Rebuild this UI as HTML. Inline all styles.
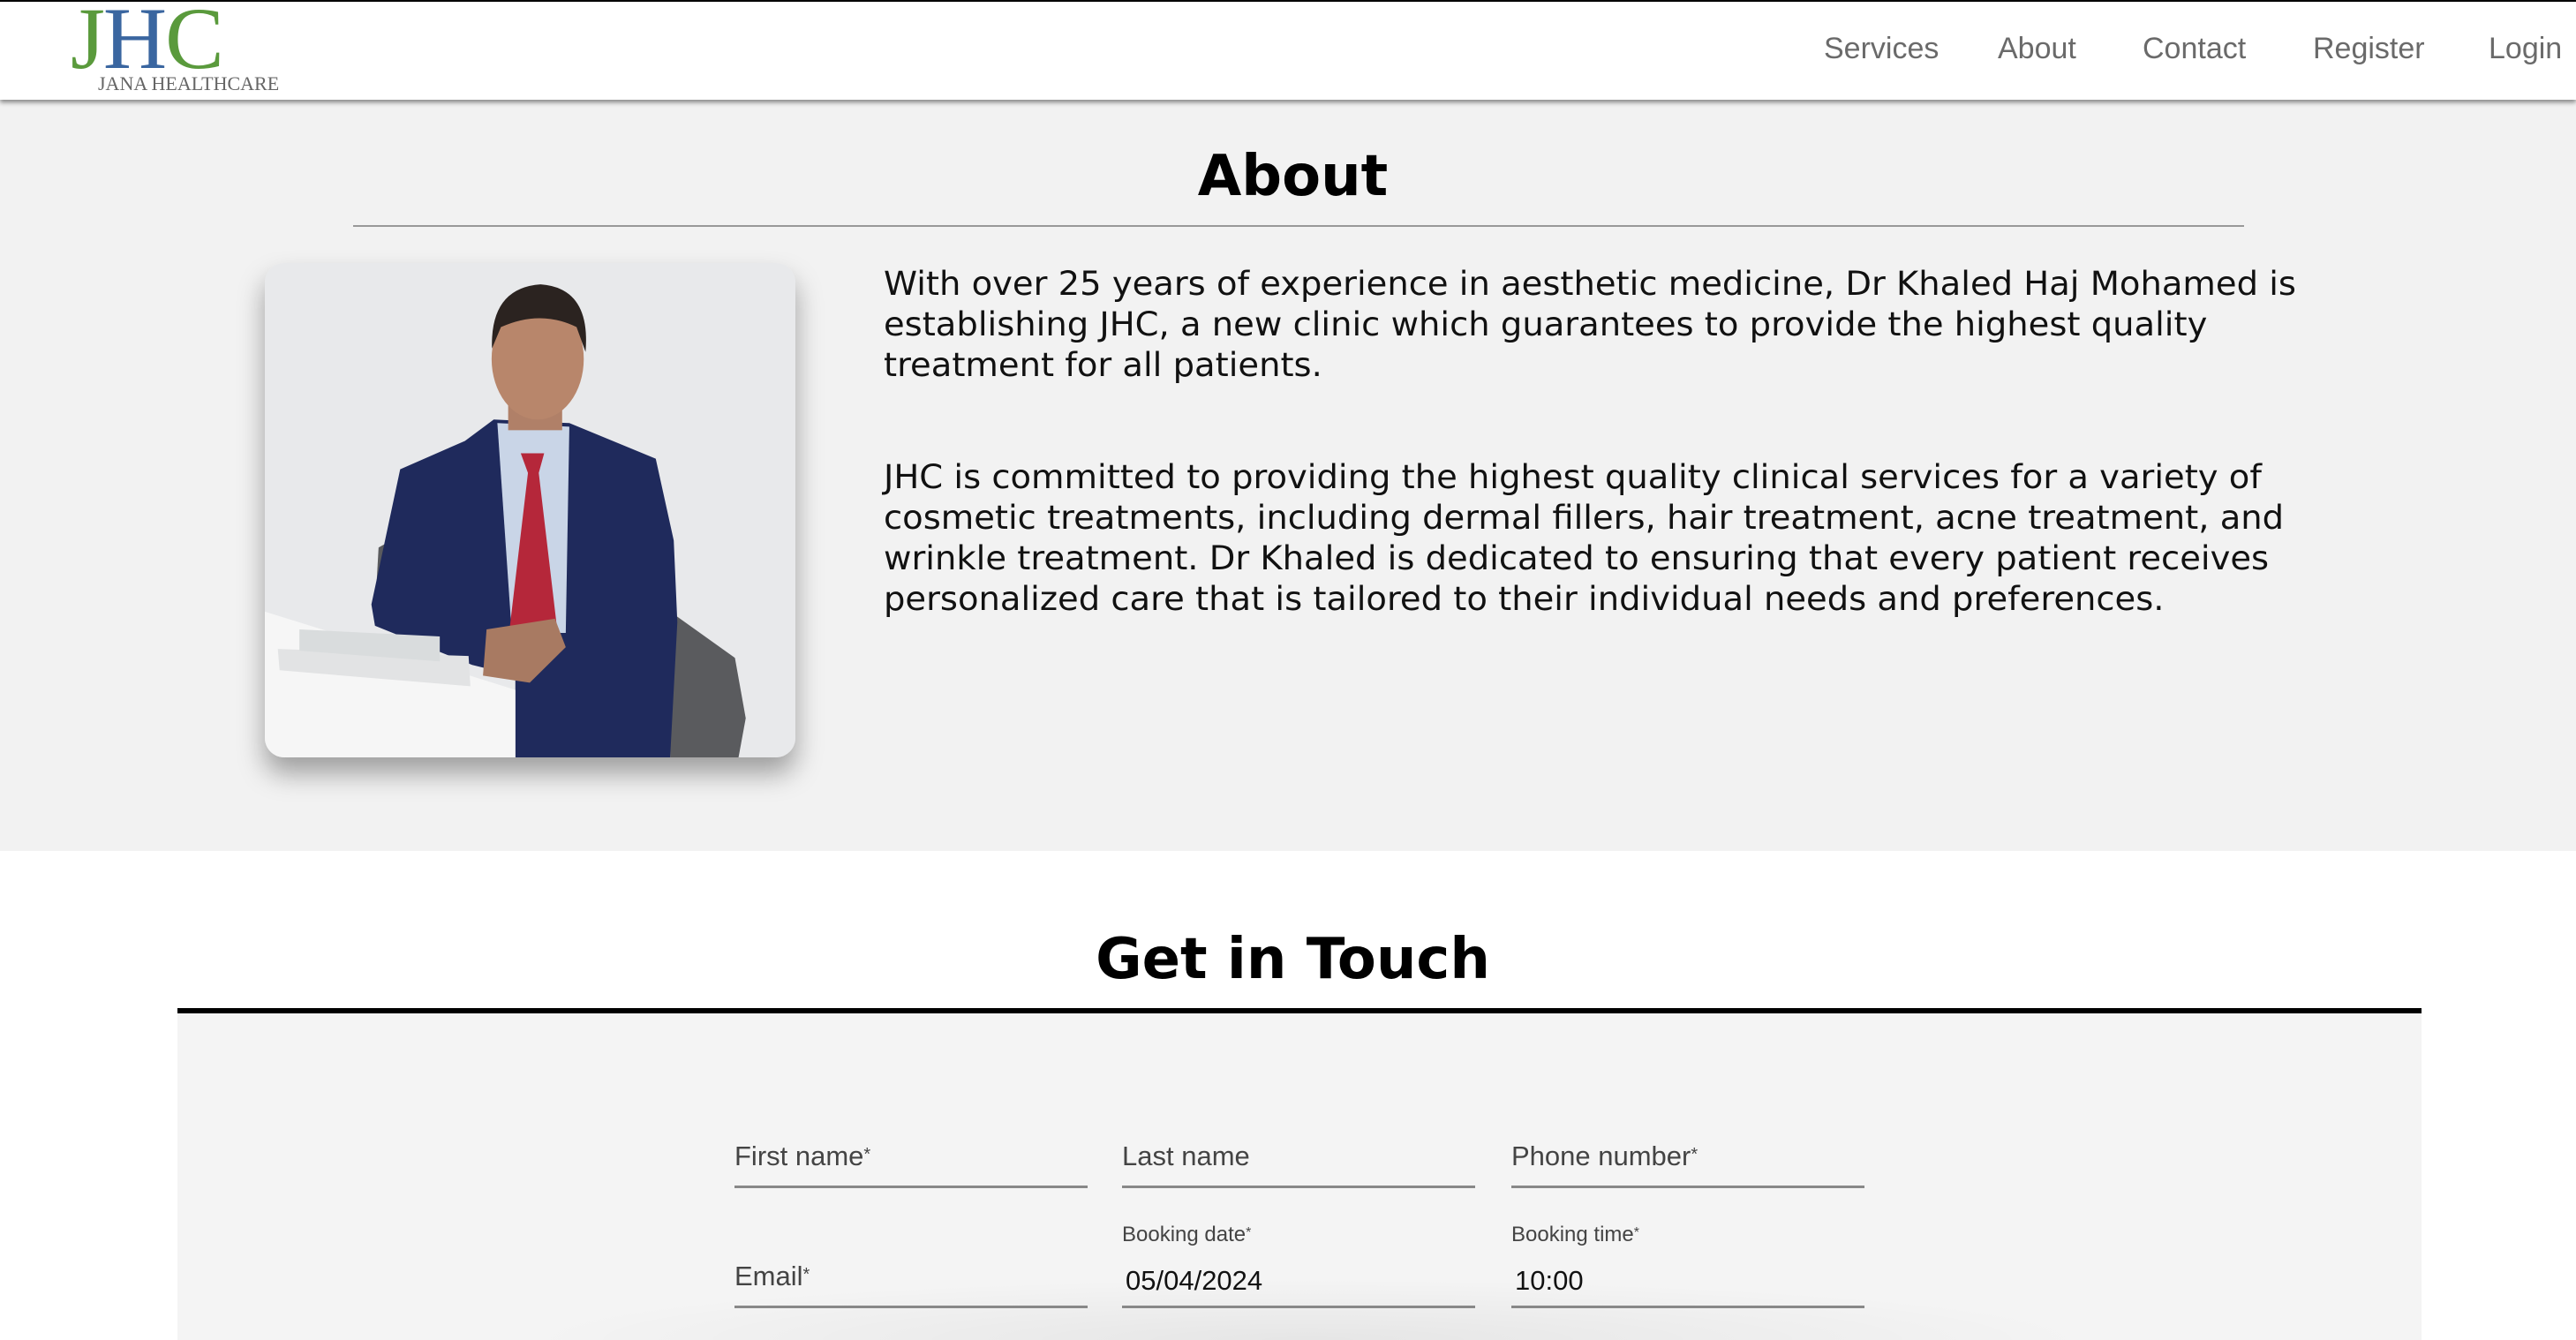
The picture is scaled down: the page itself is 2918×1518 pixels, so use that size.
<!DOCTYPE html>
<html><head><meta charset="utf-8">
<style>
*{margin:0;padding:0;box-sizing:border-box}
html{overflow:hidden;width:2918px;height:1518px}
body{width:2918px;height:1518px;overflow:hidden;background:#fff;font-family:"DejaVu Sans","Liberation Sans",sans-serif;position:relative}
.hdr{position:absolute;left:0;top:0;width:2918px;height:113px;background:#fff;border-top:2px solid #000;box-shadow:0 3px 5px rgba(0,0,0,.45);z-index:2}
.logo{position:absolute;left:80px;top:-8px;font-family:"Liberation Serif",serif;font-size:100px;line-height:1;letter-spacing:-2px}
.sub{position:absolute;left:111px;top:80px;font-family:"Liberation Serif",serif;font-size:22px;color:#666}
.nav{position:absolute;top:34px;font-family:"Liberation Sans",sans-serif;font-size:34px;color:#6a6a6a}
.about{position:absolute;left:0;top:113px;width:2918px;height:851px;background:#f2f2f2}
h1{position:absolute;left:0;width:2918px;padding-left:11px;text-align:center;font-family:"DejaVu Sans",sans-serif;font-weight:bold;font-size:64px;color:#000}
.p{position:absolute;left:1001px;font-size:37px;color:#111;line-height:46px;white-space:nowrap}
.p div{transform:scaleX(1.04);transform-origin:left}
.box{position:absolute;left:201px;top:1148px;width:2542px;height:370px;background:#f4f4f4;overflow:hidden}
.lab{position:absolute;font-family:"Liberation Sans",sans-serif;font-size:31px;color:#444}
.sm{position:absolute;font-family:"Liberation Sans",sans-serif;font-size:24px;color:#444}
.val{position:absolute;font-family:"Liberation Sans",sans-serif;font-size:31px;color:#111}
.ul{position:absolute;width:400px;height:3px;background:#888}
sup{font-size:20px;vertical-align:6px}
</style></head><body>
<div class="hdr">
 <div class="logo"><span style="color:#5a9a3c">J</span><span style="color:#3a66a0">H</span><span style="color:#5a9a3c">C</span></div>
 <div class="sub">JANA HEALTHCARE</div>
 <div class="nav" style="left:2066px">Services</div>
 <div class="nav" style="left:2263px">About</div>
 <div class="nav" style="left:2427px">Contact</div>
 <div class="nav" style="left:2620px">Register</div>
 <div class="nav" style="left:2819px">Login</div>
</div>
<div class="about">
 <h1 style="top:50px">About</h1>
 <div style="position:absolute;left:400px;top:142px;width:2142px;height:2px;background:#999"></div>
 <div style="position:absolute;left:300px;top:185px;width:601px;height:560px;border-radius:22px;overflow:hidden;box-shadow:0 18px 30px rgba(0,0,0,.35)">
 <svg width="601" height="560" viewBox="24 20 1474 1390" preserveAspectRatio="none">
  <rect x="0" y="0" width="1600" height="1500" fill="#e8e9eb"/>
  <path d="M1150 1000 L1330 1130 L1360 1300 L1340 1410 L1150 1410Z" fill="#5a5b5e"/>
  <path d="M340 820 L375 800 L380 990 L330 1000Z" fill="#5a5b5e"/>
  <path d="M320 980 L400 600 L580 520 L660 460 L870 470 L1110 570 L1160 800 L1170 1030 L1150 1410 L720 1410 L720 1180 L600 1150 L330 1040Z" fill="#1f2a5c"/>
  <path d="M670 470 L870 480 L860 1060 L710 1060Z" fill="#c9d5e7"/>
  <path d="M735 555 L800 555 L785 610 L835 1040 L770 1070 L705 1040 L755 610Z" fill="#b5273a"/>
  <rect x="700" y="380" width="150" height="110" fill="#b08068"/>
  <ellipse cx="782" cy="290" rx="128" ry="170" fill="#b8866b"/>
  <path d="M655 260 Q650 90 790 80 Q930 90 915 270 L890 200 Q790 150 680 200Z" fill="#2b2320"/>
  <path d="M640 1050 L830 1020 L860 1100 L760 1200 L630 1180Z" fill="#a87a62"/>
  <path d="M24 1000 L720 1220 L720 1410 L24 1410Z" fill="#f6f6f6"/>
  <path d="M60 1105 L590 1125 L595 1210 L65 1165Z" fill="#e2e3e4"/>
  <path d="M120 1050 L510 1070 L510 1140 L120 1110Z" fill="#d9dcdd"/>
 </svg></div>
 <div class="p" style="top:186px">
  <div>With over 25 years of experience in aesthetic medicine, Dr Khaled Haj Mohamed is</div>
  <div>establishing JHC, a new clinic which guarantees to provide the highest quality</div>
  <div>treatment for all patients.</div>
 </div>
 <div class="p" style="top:405px">
  <div>JHC is committed to providing the highest quality clinical services for a variety of</div>
  <div>cosmetic treatments, including dermal fillers, hair treatment, acne treatment, and</div>
  <div>wrinkle treatment. Dr Khaled is dedicated to ensuring that every patient receives</div>
  <div>personalized care that is tailored to their individual needs and preferences.</div>
 </div>
</div>
<h1 style="top:1050px">Get in Touch</h1>
<div style="position:absolute;left:201px;top:1142px;width:2542px;height:6px;background:#000"></div>
<div class="box">
 <div style="position:absolute;left:380px;top:300px;width:1800px;height:70px;background:radial-gradient(ellipse at center bottom,rgba(0,0,0,.06),rgba(0,0,0,0) 70%)"></div>
</div>
<div class="lab" style="left:832px;top:1292px">First name<sup>*</sup></div>
<div class="lab" style="left:1271px;top:1292px">Last name</div>
<div class="lab" style="left:1712px;top:1292px">Phone number<sup>*</sup></div>
<div class="ul" style="left:832px;top:1343px"></div>
<div class="ul" style="left:1271px;top:1343px"></div>
<div class="ul" style="left:1712px;top:1343px"></div>
<div class="sm" style="left:1271px;top:1385px">Booking date<sup style="font-size:16px;vertical-align:5px">*</sup></div>
<div class="sm" style="left:1712px;top:1385px">Booking time<sup style="font-size:16px;vertical-align:5px">*</sup></div>
<div class="lab" style="left:832px;top:1428px">Email<sup>*</sup></div>
<div class="val" style="left:1275px;top:1433px">05/04/2024</div>
<div class="val" style="left:1716px;top:1433px">10:00</div>
<div class="ul" style="left:832px;top:1479px"></div>
<div class="ul" style="left:1271px;top:1479px"></div>
<div class="ul" style="left:1712px;top:1479px"></div>
</body></html>
